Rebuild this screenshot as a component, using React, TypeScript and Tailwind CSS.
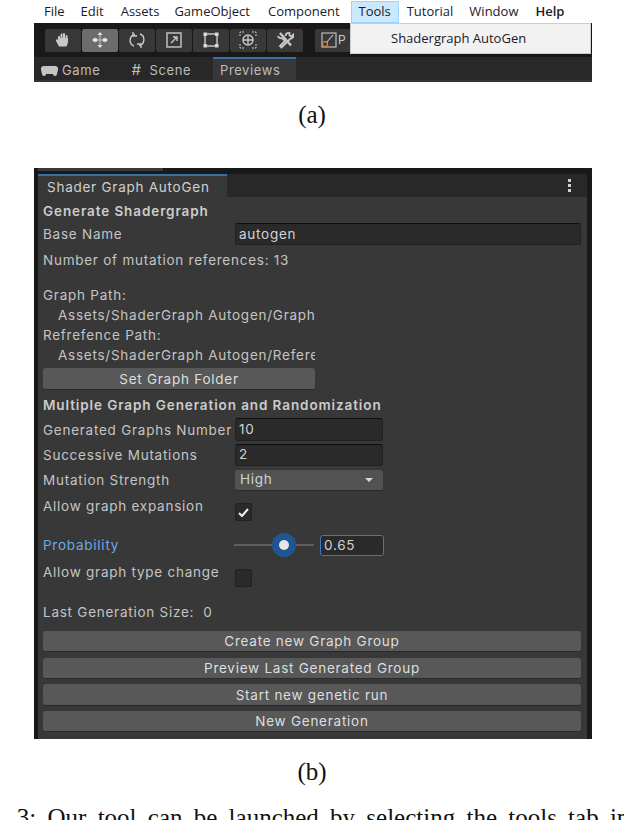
import React from "react";

const sans = "font-['Inter','Liberation_Sans',sans-serif]";

function Row({ h, label, cls = "", children }: { h: string; label?: string; cls?: string; children?: React.ReactNode }) {
  return (
    <div className={`flex items-center ${h}`}>
      <div className={`w-[192px] shrink-0 whitespace-nowrap ${cls}`}>{label}</div>
      {children}
    </div>
  );
}

function Field({ v, w = "w-[148px]", h = "h-[22px]" }: { v: string; w?: string; h?: string }) {
  return (
    <div className={`${w} ${h} flex items-center rounded-[3px] border border-[#212121] border-t-[#0d0d0d] bg-[#2a2a2a] pl-[3px] text-[#d2d2d2]`}>{v}</div>
  );
}

function Btn({ t, w = "w-full", h = "h-[21px]" }: { t: string; w?: string; h?: string }) {
  return (
    <div className={`${w} ${h} flex items-center justify-center rounded-[3px] border-b border-[#2a2a2a] bg-[#585858] pt-[1px] text-[#dedede]`}>{t}</div>
  );
}

function Tool({ active, children }: { active?: boolean; children: React.ReactNode }) {
  return (
    <div className={`w-[36px] h-[23px] flex items-center justify-center rounded-[2px] ${active ? "bg-[#6c6c6c]" : "bg-[#383838]"}`}>
      <svg width="18" height="18" viewBox="0 0 18 18" fill="none" stroke="#c8c8c8" strokeWidth="1.4">{children}</svg>
    </div>
  );
}

export default function App() {
  return (
    <div className={`w-[624px] h-[820px] overflow-hidden bg-white ${sans}`}>
      {/* (a) */}
      <div className="relative ml-[34px] w-[558px]">
        <div className="h-[23px] flex items-center text-[13px] text-[#1a1a2a] font-['Open_Sans',sans-serif] whitespace-nowrap">
          <span className="ml-[10px]">File</span>
          <span className="ml-[16px]">Edit</span>
          <span className="ml-[17px]">Assets</span>
          <span className="ml-[15px]">GameObject</span>
          <span className="ml-[18px]">Component</span>
          <span className="ml-[11px] w-[48px] h-[22px] flex items-center justify-center bg-[#cce8ff] border border-[#99d1ff]">Tools</span>
          <span className="ml-[8px]">Tutorial</span>
          <span className="ml-[16px]">Window</span>
          <span className="ml-[17px] font-semibold">Help</span>
        </div>
        <div className="h-[34px] bg-[#191919] flex items-center pl-[11px] gap-[1px]">
          <Tool>
            <path d="M5 10V6M7.500 9V3.500M10 9V3M12.500 9.500V5" strokeWidth="2" strokeLinecap="round" />
            <path d="M4 9c-1-1.500-2.800-.6-2 1l3 5.500h7.500l1.500-4V7H4.500z" fill="#c8c8c8" stroke="none" />
          </Tool>
          <Tool active>
            <path d="M9 3v12M3 9h12" strokeWidth="1" />
            <path d="M9 1l2.500 3h-5zM9 17l2.500-3h-5zM1 9l3-2.500v5zM17 9l-3-2.500v5z" fill="#e4e4e4" stroke="none" />
            <circle cx="4.500" cy="9" r="2" fill="#e4e4e4" stroke="none" />
            <circle cx="13.500" cy="9" r="2" fill="#e4e4e4" stroke="none" />
          </Tool>
          <Tool>
            <path d="M7 3.500A6 6 0 0 0 6 15M11 14.500A6 6 0 0 0 12 3" />
            <path d="M5 1v4h4M13 17v-4H9" />
          </Tool>
          <Tool>
            <rect x="2" y="2" width="14" height="14" />
            <path d="M6 12l6-6M8 6h4v4" />
          </Tool>
          <Tool>
            <path d="M4 3h10M4 15h10M3 4v10M15 4v10" />
            <rect x="1.500" y="1.500" width="3.500" height="3.500" fill="#d8d8d8" stroke="none" />
            <rect x="13" y="1.500" width="3.500" height="3.500" fill="#d8d8d8" stroke="none" />
            <rect x="1.500" y="13" width="3.500" height="3.500" fill="#d8d8d8" stroke="none" />
            <rect x="13" y="13" width="3.500" height="3.500" fill="#d8d8d8" stroke="none" />
          </Tool>
          <Tool>
            <circle cx="9" cy="9" r="5" />
            <path d="M9 4v10M4 9h10" />
            <path d="M1 5V1h4M13 1h4v4M1 13v4h4M17 13v4h-4" strokeWidth="1" strokeDasharray="2 1" />
          </Tool>
          <Tool>
            <path d="M4 2l11 12.500" strokeWidth="2.400" />
            <path d="M2 5a3 3 0 0 0 4 2l3 3-5 5 1.500 1.500 9-9a3 3 0 0 0 3-4l-2 2-2-1V2a3 3 0 0 0-4 3" strokeWidth="1.800" />
          </Tool>
          <div className="ml-[11px] w-[45px] h-[23px] rounded-[2px] bg-[#383838] flex items-center pl-[6px] gap-[1px] text-[12px] text-[#c8c8c8]">
            <svg width="16" height="16" viewBox="0 0 16 16" fill="none" strokeWidth="1.100">
              <rect x="1" y="1" width="14" height="14" stroke="#c8c8c8" />
              <path d="M5 11l7-8" stroke="#c8c8c8" />
              <circle cx="4" cy="12" r="2.500" stroke="#e08a3a" />
            </svg>
            P
          </div>
        </div>
        <div className="h-[25px] bg-[#282828] border-b-2 border-[#333333] flex items-end text-[13px] tracking-[0.6px] text-[#bdbdbd]">
          <div className="h-[21px] pt-[2px] flex items-center ml-[7px] gap-[4px] w-[172px]">
            <svg width="17" height="10" viewBox="0 0 17 10" fill="#c4c4c4">
              <path d="M3 0h11a3 3 0 0 1 3 4l-1 4a2 2 0 0 1-4 0H5a2 2 0 0 1-4 0L0 4a3 3 0 0 1 3-4z" />
            </svg>
            <span>Game</span>
            <span className="ml-[27px] flex items-center gap-[8px]">
              <span className="text-[15px]">#</span>Scene
            </span>
          </div>
          <div className="h-[23px] w-[83px] pt-[2px] flex items-center pl-[7px] border-t-2 border-[#3a6ea5] bg-[#383838]">Previews</div>
        </div>
        <div className="absolute left-[316px] top-[23px] w-[241px] h-[31px] pt-[1px] bg-[#f2f2f2] border border-[#cccccc] text-[13px] text-[#1a1a2a] flex items-center pl-[40px] font-['Open_Sans',sans-serif]">
          Shadergraph AutoGen
        </div>
      </div>
      <div className="h-[66px] mb-[20px] flex items-center justify-center font-['Liberation_Serif',serif] text-[25px] text-[#111]">(a)</div>

      {/* (b) */}
      <div className="ml-[34px] w-[558px] h-[571px] bg-[#191919] pl-[4px] pr-[5px] text-[13.500px] tracking-[0.75px] text-[#c4c4c4]">
        <div className="h-[6px] pb-[3px]"><div className="h-[3px] w-[125px] bg-[#3a3a3a]" /></div>
        <div className="h-[23px] bg-[#282828] flex items-stretch justify-between pr-[16px]">
          <div className="w-[189px] pt-[2px] border-t-2 border-[#3a6ea5] bg-[#383838] pl-[9px] flex items-center text-[#d0d0d0] whitespace-nowrap">Shader Graph AutoGen</div>
          <div className="flex flex-col justify-center gap-[2px]">
            <div className="w-[3px] h-[3px] bg-[#cfcfcf]" />
            <div className="w-[3px] h-[3px] bg-[#cfcfcf]" />
            <div className="w-[3px] h-[3px] bg-[#cfcfcf]" />
          </div>
        </div>
        <div className="h-[542px] bg-[#383838] pl-[5px] pr-[6px]">
          <div className="h-[26px] pt-[2px] flex items-center font-semibold tracking-[0.9px] text-[#cccccc]">Generate Shadergraph</div>
          <Row h="h-[22px]" label="Base Name"><Field v="autogen" w="w-[346px]" /></Row>
          <div className="h-[30px] flex items-center">Number of mutation references: 13</div>
          <div className="h-[19px] mt-[11px] flex items-center">Graph Path:</div>
          <div className="h-[20px] flex items-center pl-[15px] w-[272px] overflow-hidden whitespace-nowrap">Assets/ShaderGraph Autogen/Graph</div>
          <div className="h-[20px] flex items-center">Refrefence Path:</div>
          <div className="h-[20px] flex items-center pl-[15px] w-[272px] overflow-hidden whitespace-nowrap">Assets/ShaderGraph Autogen/Reference</div>
          <div className="mt-[3px]"><Btn t="Set Graph Folder" w="w-[272px]" h="h-[22px]" /></div>
          <div className="h-[28px] pt-[2px] flex items-center font-semibold tracking-[0.9px] text-[#cccccc] whitespace-nowrap">Multiple Graph Generation and Randomization</div>
          <Row h="h-[23px]" label="Generated Graphs Number" cls="pt-[1px]"><Field v="10" h="h-[23px]" /></Row>
          <Row h="h-[27px]" label="Successive Mutations" cls="pt-[1px]"><Field v="2" /></Row>
          <Row h="h-[24px]" label="Mutation Strength">
            <div className="w-[148px] h-[21px] rounded-[3px] border-b border-[#2a2a2a] bg-[#525252] pl-[5px] pr-[10px] flex items-center justify-between text-[#d2d2d2]">
              High
              <div className="w-0 h-0 border-x-[4px] border-x-transparent border-t-[4px] border-t-[#d8d8d8]" />
            </div>
          </Row>
          <div className="h-[35px] flex pt-[4px]">
            <div className="w-[192px] shrink-0 whitespace-nowrap h-[20px] leading-[20px]">Allow graph expansion</div>
            <div className="mt-[7px] w-[17px] h-[18px] rounded-[2px] border border-[#212121] bg-[#2a2a2a] flex items-center justify-center">
              <svg width="11" height="9" viewBox="0 0 11 9" fill="none" stroke="#efefef" strokeWidth="2"><path d="M1 5l3 3 6-7" /></svg>
            </div>
          </div>
          <Row h="h-[36px]" label="Probability" cls="text-[#6aa9e6]">
            <div className="relative w-[80px] h-[2px] bg-[#5e5e5e] -ml-[1px]">
              <div className="absolute left-[38px] -top-[11px] w-[24px] h-[24px] rounded-full bg-[#1f5590] flex items-center justify-center">
                <div className="w-[10px] h-[10px] rounded-full bg-[#e6e6e6]" />
              </div>
            </div>
            <div className="ml-[6px] w-[64px] h-[21px] rounded-[3px] border border-[#3a79bb] bg-[#2a2a2a] pl-[3px] flex items-center text-[#d2d2d2]">0.65</div>
          </Row>
          <div className="h-[35px] flex">
            <div className="w-[192px] shrink-0 whitespace-nowrap h-[20px] leading-[20px] -mt-[1px]">Allow graph type change</div>
            <div className="w-[17px] h-[18px] mt-[6px] rounded-[2px] border border-[#212121] bg-[#2a2a2a]" />
          </div>
          <div className="h-[28px] flex items-center">Last Generation Size:&nbsp; 0</div>
          <div className="mt-[5px] flex flex-col gap-[5px]">
            <div className="mb-[1px]"><Btn t="Create new Graph Group" /></div>
            <Btn t="Preview Last Generated Group" />
            <Btn t="Start new genetic run" h="h-[22px]" />
            <Btn t="New Generation" />
          </div>
        </div>
      </div>
      <div className="h-[66px] flex items-center justify-center font-['Liberation_Serif',serif] text-[25px] text-[#111]">(b)</div>
      <div className="-ml-[34px] -mt-[1px] whitespace-nowrap font-['Liberation_Serif',serif] text-[25px] [word-spacing:5px] leading-[28px] text-[#111]">Fig. 3: Our tool can be launched by selecting the tools tab in</div>
    </div>
  );
}
